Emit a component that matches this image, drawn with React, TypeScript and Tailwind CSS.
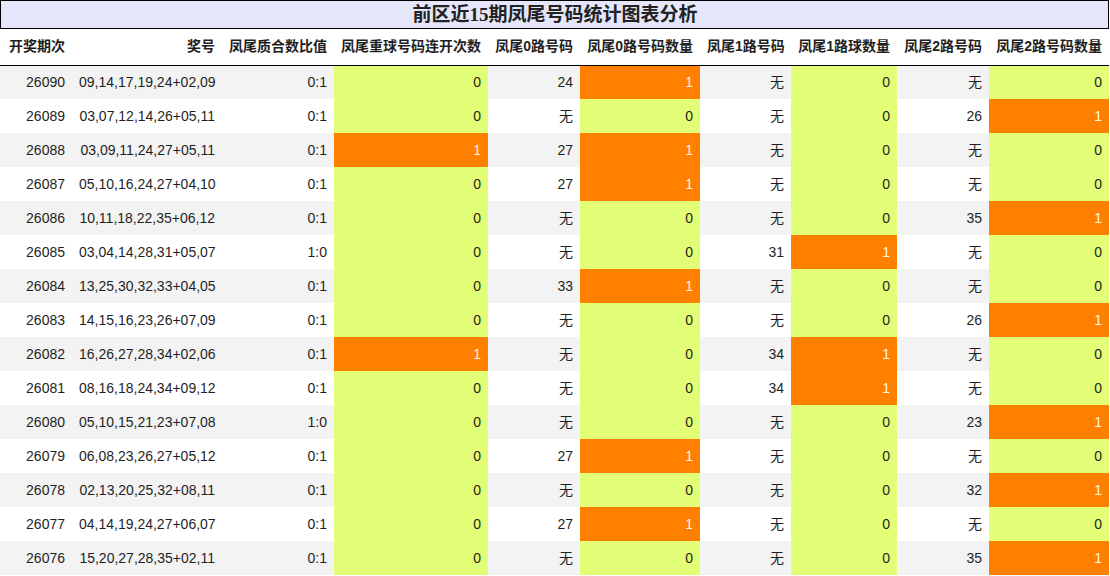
const headers = [
  "开奖期次",
  "奖号",
  "凤尾质合数比值",
  "凤尾重球号码连开次数",
  "凤尾0路号码",
  "凤尾0路号码数量",
  "凤尾1路号码",
  "凤尾1路球数量",
  "凤尾2路号码",
  "凤尾2路号码数量",
];

const widths = ["w-[72px]", "w-[150px]", "w-[112px]", "w-[154px]", "w-[92px]", "w-[120px]", "w-[91px]", "w-[106px]", "w-[92px]", "w-[120px]"];

// issue, numbers, ratio, repeat, r0, r0n, r1, r1n, r2, r2n
const rows: [string, string, string, number, string, number, string, number, string, number][] = [
  ["26090", "09,14,17,19,24+02,09", "0:1", 0, "24", 1, "无", 0, "无", 0],
  ["26089", "03,07,12,14,26+05,11", "0:1", 0, "无", 0, "无", 0, "26", 1],
  ["26088", "03,09,11,24,27+05,11", "0:1", 1, "27", 1, "无", 0, "无", 0],
  ["26087", "05,10,16,24,27+04,10", "0:1", 0, "27", 1, "无", 0, "无", 0],
  ["26086", "10,11,18,22,35+06,12", "0:1", 0, "无", 0, "无", 0, "35", 1],
  ["26085", "03,04,14,28,31+05,07", "1:0", 0, "无", 0, "31", 1, "无", 0],
  ["26084", "13,25,30,32,33+04,05", "0:1", 0, "33", 1, "无", 0, "无", 0],
  ["26083", "14,15,16,23,26+07,09", "0:1", 0, "无", 0, "无", 0, "26", 1],
  ["26082", "16,26,27,28,34+02,06", "0:1", 1, "无", 0, "34", 1, "无", 0],
  ["26081", "08,16,18,24,34+09,12", "0:1", 0, "无", 0, "34", 1, "无", 0],
  ["26080", "05,10,15,21,23+07,08", "1:0", 0, "无", 0, "无", 0, "23", 1],
  ["26079", "06,08,23,26,27+05,12", "0:1", 0, "27", 1, "无", 0, "无", 0],
  ["26078", "02,13,20,25,32+08,11", "0:1", 0, "无", 0, "无", 0, "32", 1],
  ["26077", "04,14,19,24,27+06,07", "0:1", 0, "27", 1, "无", 0, "无", 0],
  ["26076", "15,20,27,28,35+02,11", "0:1", 0, "无", 0, "无", 0, "35", 1],
];

function Plain({ v }: { v: string }) {
  return <td className="h-[34px] px-[7px] pt-[1px] text-right">{v}</td>;
}

function Flag({ v }: { v: number }) {
  return (
    <td
      className={
        v === 1
          ? "h-[34px] px-[7px] pt-[1px] text-right bg-[#ff8000] text-[#fff7ea]"
          : "h-[34px] px-[7px] pt-[1px] text-right bg-[#e1fe76]"
      }
    >
      {v}
    </td>
  );
}

export default function App() {
  return (
    <main className="w-[1110px] h-[576px] overflow-hidden bg-white text-[#1f1f1f] font-['Liberation_Sans','Noto_Sans_CJK_SC',sans-serif]">
      <div className="w-[1109px] h-[29px] border border-black bg-[#e6e6fa] flex items-center justify-center">
        <h1 className="text-[19px] font-bold leading-none text-[#222] font-['Liberation_Serif','Noto_Sans_CJK_SC',serif] pl-[1px]">
          前区近15期凤尾号码统计图表分析
        </h1>
      </div>
      <table className="w-[1109px] table-fixed border-collapse text-[14px]">
        <colgroup>
          {widths.map((w, i) => (
            <col key={i} className={w} />
          ))}
        </colgroup>
        <thead>
          <tr className="border-b border-black">
            {headers.map((h) => (
              <th key={h} className="h-[36px] px-[7px] text-right font-bold whitespace-nowrap">
                {h}
              </th>
            ))}
          </tr>
        </thead>
        <tbody>
          {rows.map((r, i) => (
            <tr key={r[0]} className={i % 2 === 0 ? "bg-[#f3f3f3]" : "bg-white"}>
              <Plain v={r[0]} />
              <Plain v={r[1]} />
              <Plain v={r[2]} />
              <Flag v={r[3]} />
              <Plain v={r[4]} />
              <Flag v={r[5]} />
              <Plain v={r[6]} />
              <Flag v={r[7]} />
              <Plain v={r[8]} />
              <Flag v={r[9]} />
            </tr>
          ))}
        </tbody>
      </table>
    </main>
  );
}
